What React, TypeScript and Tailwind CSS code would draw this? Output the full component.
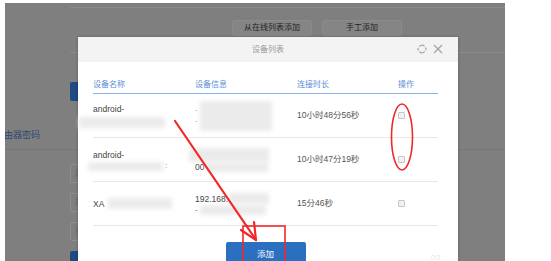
export default function App() {
  const Blob = ({ className }: { className: string }) => (
    <div className={"bg-[#ebebeb] blur-[2px] " + className} />
  );
  const Check = () => (
    <div className="w-[7px] h-[7px] border border-[#c6c6c6] bg-[#f1f1f1] rounded-[1px]" />
  );
  return (
    <div className="relative w-[551px] h-[261px] overflow-hidden bg-white font-['Liberation_Sans','Noto_Sans_CJK_SC',sans-serif]">
      {/* dimmed page behind the dialog */}
      <div className="ml-[5px] mt-[3px] w-[500px] h-[258px] bg-[#7f7f7f] overflow-hidden flex flex-col">
        <div className="ml-[65px] mt-[4px] h-px bg-[#8a8a8a]" />
        <div className="ml-[227px] mt-[12px] flex gap-[10px]">
          <div className="w-[80px] h-[16px] bg-[#858585] border border-[#8b8b8b] rounded-[2px] flex items-center justify-center text-[8px] text-[#222]">
            从在线列表添加
          </div>
          <div className="w-[80px] h-[16px] bg-[#858585] border border-[#8b8b8b] rounded-[2px] flex items-center justify-center text-[8px] text-[#222]">
            手工添加
          </div>
        </div>
        <div className="ml-[65px] mt-[16px] h-px bg-[#8a8a8a]" />
        <div className="ml-[65px] mt-[29px] w-[40px] h-[20px] rounded-[2px] bg-[#1e4b80]" />
        <div className="-ml-[10px] mt-[28px] text-[9px] leading-[12px] text-[#2d4a70] whitespace-nowrap">路由器密码</div>
        <div className="mt-[8px] h-px bg-[#767676]" />
        <div className="ml-[65px] mt-[14px] flex flex-col gap-[10px]">
          <div className="w-[40px] h-[19px] border border-[#8e8e8e] rounded-[2px] pl-[4px] text-[8px] leading-[17px] text-[#6a6a6a] whitespace-nowrap overflow-hidden">路由器</div>
          <div className="w-[40px] h-[19px] border border-[#8e8e8e] rounded-[2px] pl-[4px] text-[8px] leading-[17px] text-[#6a6a6a] whitespace-nowrap overflow-hidden">端口</div>
          <div className="w-[40px] h-[19px] border border-[#8e8e8e] rounded-[2px] pl-[4px] text-[8px] leading-[17px] text-[#6a6a6a] whitespace-nowrap overflow-hidden">密码</div>
          <div className="w-[40px] h-[10px] rounded-t-[2px] bg-[#1e4b80]" />
        </div>
      </div>

      {/* dialog */}
      <div className="absolute left-[78px] top-[37px] w-[380px] h-[240px] bg-white shadow-[0_0_3px_rgba(0,0,0,0.25)]">
        <div className="relative h-[25px] bg-[#f3f3f3] flex items-center justify-center text-[8px] text-[#9a9a9a]">
          设备列表
          <div className="absolute right-[15px] top-[7px] flex items-center gap-[6px]">
            <svg width="10" height="10" viewBox="0 0 10 10" fill="none" stroke="#a5a5a5" strokeWidth="1.2">
              <path d="M2.2 2.6 A4 4 0 0 1 7.6 2.2" />
              <path d="M7.8 7.4 A4 4 0 0 1 2.4 7.8" />
              <path d="M8.6 3.4 A4 4 0 0 1 8.8 6.2" />
              <path d="M1.4 6.6 A4 4 0 0 1 1.2 3.8" />
            </svg>
            <svg width="10" height="10" viewBox="0 0 10 10" fill="none" stroke="#a0a0a0" strokeWidth="1.1">
              <path d="M1 1 L9 9 M9 1 L1 9" />
            </svg>
          </div>
        </div>
        <div className="pl-[15px] pr-[20px] pt-[14px]">
          <div className="grid grid-cols-[102px_102px_101px_40px] items-center h-[18px] border-b border-[#88b3e6] text-[8px] text-[#5a8ed6]">
            <div>设备名称</div>
            <div>设备信息</div>
            <div>连接时长</div>
            <div>操作</div>
          </div>

          {/* row 1 */}
          <div className="grid grid-cols-[102px_102px_101px_40px] items-center h-[44px] border-b border-[#e8e8e8] text-[8px] text-[#555]">
            <div className="flex flex-col">
              <div className="text-[8.5px] leading-[12px] text-[#444]">android-</div>
              <Blob className="-ml-[14px] mt-[2px] w-[86px] h-[11px]" />
            </div>
            <div className="flex items-center">
              <div className="flex flex-col gap-[6px] text-[#777] leading-[5px]">
                <span>·</span>
                <span>·</span>
              </div>
              <Blob className="ml-[2px] w-[72px] h-[30px]" />
            </div>
            <div className="text-[8.5px]">10小时48分56秒</div>
            <div><Check /></div>
          </div>

          {/* row 2 */}
          <div className="grid grid-cols-[102px_102px_101px_40px] items-center h-[44px] border-b border-[#e8e8e8] text-[8px] text-[#555]">
            <div className="flex flex-col">
              <div className="text-[8.5px] leading-[12px] text-[#444]">android-</div>
              <div className="flex items-center mt-[1px]">
                <Blob className="-ml-[5px] w-[75px] h-[9px]" />
                <span className="ml-[2px] leading-[8px] text-[#777]">:</span>
              </div>
            </div>
            <div className="flex flex-col">
              <Blob className="-ml-[6px] w-[80px] h-[14px]" />
              <div className="flex items-center">
                <span className="text-[8.5px] leading-[10px] text-[#444]">00</span>
                <Blob className="ml-[2px] w-[62px] h-[10px]" />
              </div>
            </div>
            <div className="text-[8.5px]">10小时47分19秒</div>
            <div><Check /></div>
          </div>

          {/* row 3 */}
          <div className="grid grid-cols-[102px_102px_101px_40px] items-center h-[44px] border-b border-[#e8e8e8] text-[8px] text-[#555]">
            <div className="flex items-center">
              <span className="text-[8.5px] leading-[12px] text-[#444]">XA</span>
              <Blob className="ml-[4px] w-[64px] h-[11px]" />
            </div>
            <div className="flex flex-col">
              <div className="flex items-center">
                <span className="text-[8.5px] leading-[12px] text-[#444]">192.168.</span>
                <Blob className="ml-[1px] w-[40px] h-[11px]" />
              </div>
              <div className="flex items-center">
                <span className="text-[8px] leading-[10px] text-[#555]">-</span>
                <Blob className="ml-[2px] w-[66px] h-[10px]" />
              </div>
            </div>
            <div className="text-[8.5px]">15分46秒</div>
            <div><Check /></div>
          </div>

          {/* footer */}
          <div className="relative mt-[16px] flex justify-center">
            <div className="w-[80px] h-[24px] bg-[#2b6fc1] rounded-[2px] flex items-center justify-center text-[8.5px] text-white">
              添加
            </div>
            <div className="absolute right-[-3px] top-[10px] text-[9px] text-[#dcdcdc] leading-[10px]">○○</div>
          </div>
        </div>
      </div>

      {/* red annotations */}
      <svg className="absolute left-0 top-0 pointer-events-none" width="551" height="261" viewBox="0 0 551 261" fill="none">
        <ellipse cx="402" cy="137" rx="10.5" ry="33" stroke="#f02828" strokeWidth="1.6" />
        <path d="M175 121 L256 240" stroke="#f02828" strokeWidth="2.2" strokeLinecap="round" />
        <path d="M241 230 L256 240 L254 222" stroke="#f02828" strokeWidth="2.2" strokeLinecap="round" strokeLinejoin="round" />
        <rect x="243" y="226" width="42" height="40" stroke="#f02828" strokeWidth="1.6" />
      </svg>
    </div>
  );
}
